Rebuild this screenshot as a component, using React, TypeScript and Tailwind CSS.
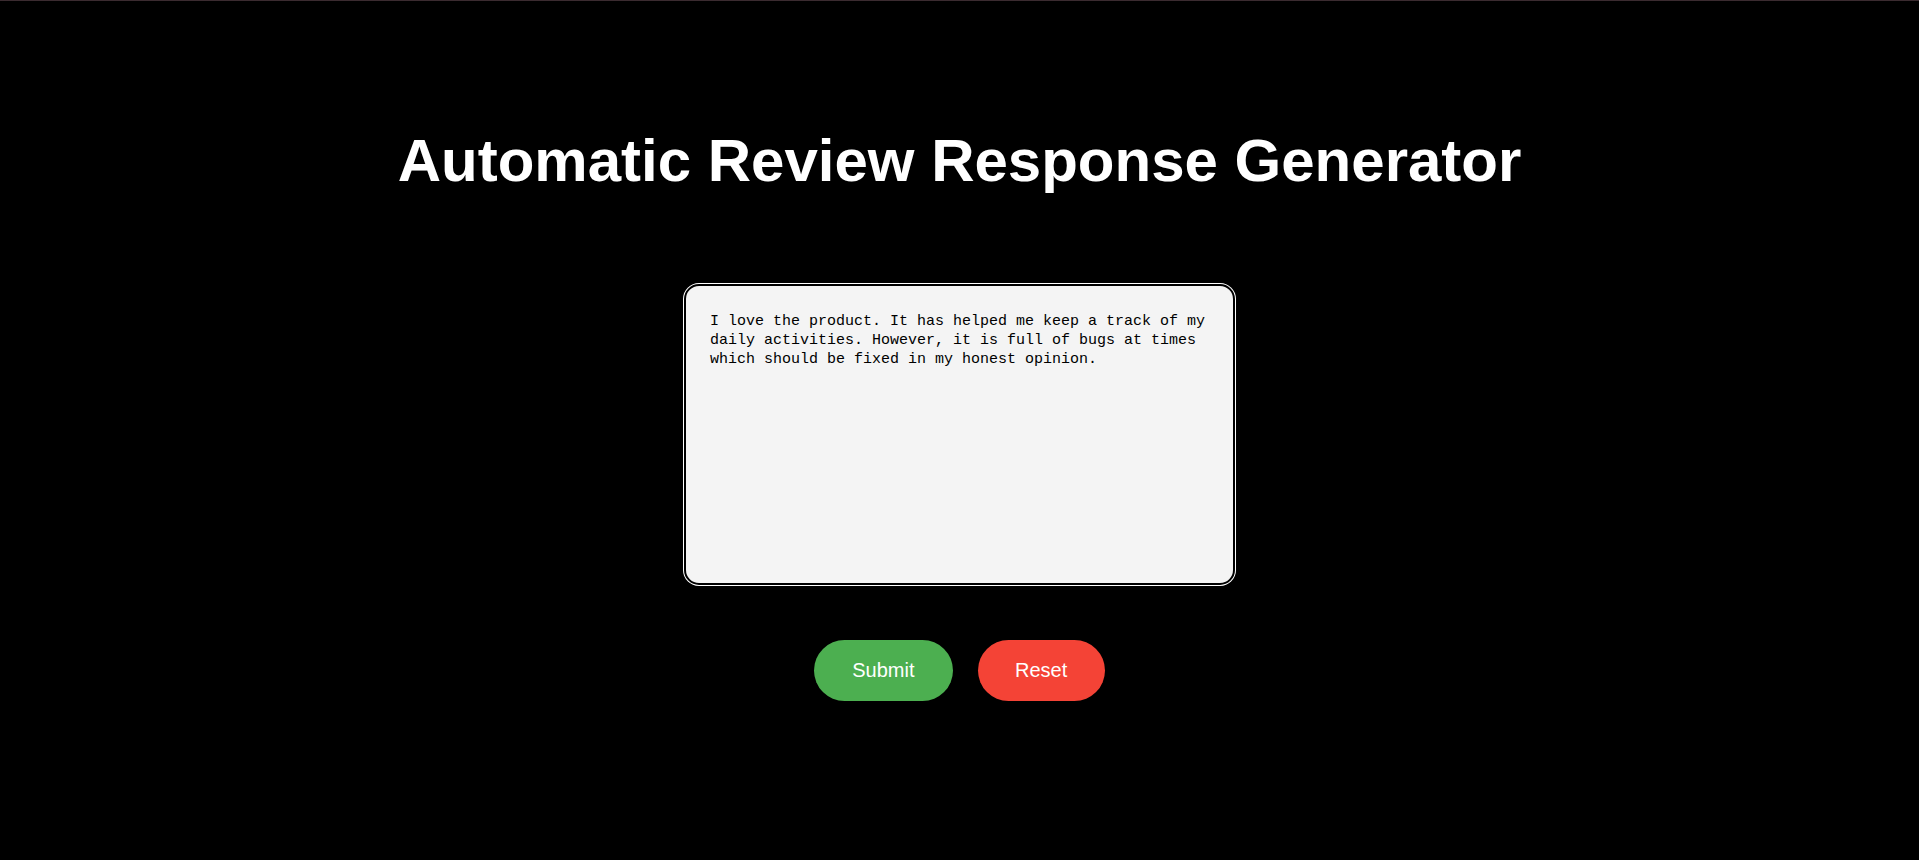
import React from "react";

export default function App() {
  return (
    <div className="min-h-screen w-full bg-black flex flex-col items-center" style={{ fontFamily: '"Liberation Sans", Arial, sans-serif' }}>
      <div className="h-px w-full bg-[#3b2b30]" />
      <h1 className="mt-[126px] text-[60px] font-bold leading-[67px] text-white" style={{ fontFamily: '"Liberation Sans", Arial, sans-serif' }}>
        Automatic Review Response Generator
      </h1>
      <textarea
        className="mt-[90px] box-border h-[301px] w-[551px] resize-none rounded-[15px] border-2 border-black bg-[#f4f4f4] pl-[24px] pr-[20px] pt-[26px] pb-[20px] text-[15px] leading-[19px] text-black shadow-[0_0_0_1px_#ffffff] outline-none"
        style={{ fontFamily: '"Liberation Mono", "DejaVu Sans Mono", monospace' }}
        defaultValue="I love the product. It has helped me keep a track of my daily activities. However, it is full of bugs at times which should be fixed in my honest opinion."
      />
      <div className="mt-[55px] flex gap-[25px]">
        <button className="h-[61px] rounded-full bg-[#4caf50] px-[38px] pb-[1px] text-[20px] text-white">Submit</button>
        <button className="h-[61px] rounded-full bg-[#f44336] px-[37.5px] pb-[1px] text-[20px] text-white">Reset</button>
      </div>
    </div>
  );
}
